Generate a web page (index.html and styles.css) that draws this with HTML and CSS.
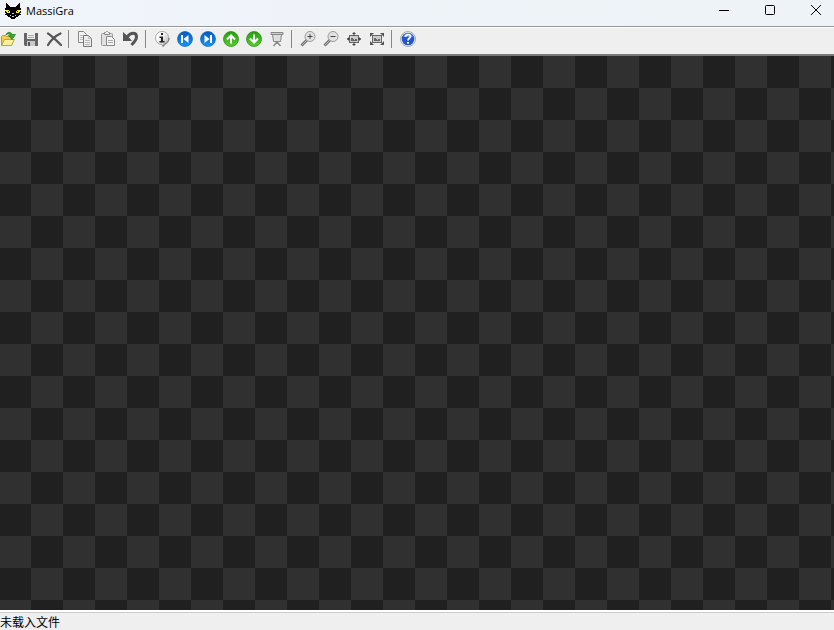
FILE: index.html
```
<!DOCTYPE html>
<html lang="zh-CN">
<head>
<meta charset="utf-8">
<meta name="viewport" content="width=device-width, initial-scale=1">
<title>MassiGra</title>
<link rel="stylesheet" href="styles.css">
</head>
<body>
<svg class="defs" aria-hidden="true">
  <defs>
    <linearGradient id="blue" x2="0" y2="1"><stop offset="0" stop-color="#0759bd"/><stop offset="1" stop-color="#1496fa"/></linearGradient>
    <linearGradient id="green" x2="0" y2="1"><stop offset="0" stop-color="#269d13"/><stop offset="1" stop-color="#55cf2c"/></linearGradient>
    <linearGradient id="silver" x2="1" y2="1"><stop offset="0.300" stop-color="#fff"/><stop offset="1" stop-color="#aaa"/></linearGradient>
    <g id="lens"><path d="M7 9 1.500 14.500" stroke="#777" stroke-width="3"/><path d="M7 9 2 14" stroke="#b5b5b5"/><circle cx="10" cy="5.500" r="5" fill="#e2e2e2" stroke="#999"/></g>
    <g id="photo"><path d="M3 4h10v8H3z" fill="#666"/><path d="M4 5h8v6H4z" fill="#ccc"/><path d="M5 9V7h2v1h1v1h1V8h2v2H5z" fill="#666"/></g>
  </defs>
</svg>
<header class="titlebar">
  <svg class="cat" viewBox="0 0 16 16" shape-rendering="crispEdges" aria-hidden="true"><path d="M1 0h1v1h1v1h1v1h1v1h6V3h1V2h1V1h1V0h1v5h1v2h-1v1h1v2h-1v1h1v1h-2v1h-1v1h-2v1h-1v1H6v-1H5v-1H3v-1H2v-1H0v-1h1v-1H0V8h1V7H0V5h1z"/><path d="M1 7h3v1h1v2H2V9H1zM15 7h-3v1h-1v2h3V9h1z" fill="#ffee12"/><path d="M3 8h1v1H3zM12 8h1v1h-1z" fill="#000"/><path d="M7 10h2v1H7zM5 12h1v1H5zM10 12h1v1h-1zM7 13h2v1H7z" fill="#ccc"/></svg>
  <h1 class="title">MassiGra</h1>
  <div class="window-controls">
    <button type="button" aria-label="最小化"><svg viewBox="0 0 12 12"><path d="M1 6.500h10"/></svg></button>
    <button type="button" aria-label="最大化"><svg viewBox="0 0 12 12"><rect x="1.500" y="1.500" width="9" height="9" rx="1"/></svg></button>
    <button type="button" aria-label="关闭"><svg viewBox="0 0 12 12"><path d="m1 1 10 10M11 1 1 11"/></svg></button>
  </div>
</header>
<nav class="toolbar" aria-label="工具栏">
  <button type="button" aria-label="打开"><svg viewBox="0 0 16 16"><path d="M1.500 14.500V5.500l1-1h3l1 1h5v9z" fill="#f0cf55" stroke="#c29a20"/><path d="M1.500 14.500 4.500 8.500h10l-3 6z" fill="#fff0a0" stroke="#c9a32b"/><path d="M6 4C7 .5 11 .5 12 3.500h3.500L12 8.500 8.500 4.500h2C10 2.500 8 2.500 6 4z" fill="#32a82c" stroke="#168018" stroke-width=".7"/></svg></button>
  <button type="button" aria-label="保存"><svg viewBox="0 0 16 16"><path d="M1 2h14v13H2l-1-1z" fill="#656565"/><path d="M4 2h8v6H4z" fill="#eee"/><path d="M5 4.500h6M5 6.500h6" stroke="#aaa"/><path d="M4 10h8v5H4z" fill="#c9c9c9"/><path d="M5 11h2v4H5z" fill="#555"/></svg></button>
  <button type="button" aria-label="删除"><svg viewBox="0 0 16 16"><path d="M2 2.500C6 5 10 9 15 14M14.500 2.500C9 5 5 9 2 14" fill="none" stroke="#555" stroke-width="2.200" stroke-linecap="round"/></svg></button>
  <span class="separator"></span>
  <button type="button" aria-label="复制"><svg viewBox="0 0 16 16"><path d="M1.500.5h5l3 3v8h-8z" fill="#f3f3f3" stroke="#888"/><path d="M3 4.500h3M3 6.500h3M3 8.500h3" stroke="#bbb"/><path d="M6.500 4.500h5l3 3v8h-8z" fill="#eee" stroke="#777"/><path d="M11.500 4.500v3h3M8 9.500h5M8 11.500h5M8 13.500h5" fill="none" stroke="#bbb"/></svg></button>
  <button type="button" aria-label="粘贴"><svg viewBox="0 0 16 16"><rect x="1.500" y="2.500" width="11" height="12" rx="1" fill="#e0e0e0" stroke="#999"/><path d="M4.500 3.500v-2h1l1-1h1l1 1h1v2z" fill="#eee" stroke="#888"/><path d="M6.500 5.500h5l3 3v6h-8z" fill="#f4f4f4" stroke="#888"/><path d="M8 9.500h5M8 11.500h5" stroke="#aaa"/></svg></button>
  <button type="button" aria-label="撤销"><svg viewBox="0 0 16 16"><path d="M4 6C8 1 13.500 1 13.500 6c0 3-2 5-5 8" fill="none" stroke="#555" stroke-width="3"/><path d="M0 1v9h9L6.500 7 5 5.500z" fill="#555"/></svg></button>
  <span class="separator"></span>
  <button type="button" aria-label="图像信息"><svg viewBox="0 0 16 16"><path d="M8 .5a7 7 0 0 1 3.500 13L9 16l-1-2.500A6.500 6.500 0 1 1 8 .5z" fill="url(#silver)" stroke="#aaa"/><path d="m9 15 1.500-2C13 12 15 10 15 7" fill="none" stroke="#777"/><path d="M7 2h2v2H7zM5.500 5.500H9V10h1.500v1.500h-5V10H7V7H5.500z" fill="#222"/></svg></button>
  <button type="button" aria-label="上一张"><svg viewBox="0 0 16 16"><circle cx="8" cy="8" r="7.500" fill="url(#blue)" stroke="#1266b7" stroke-width=".7"/><path d="M4 4h2v8H4zM11.500 4v8L6.500 8z" fill="#fff"/></svg></button>
  <button type="button" aria-label="下一张"><svg viewBox="0 0 16 16"><circle cx="8" cy="8" r="7.500" fill="url(#blue)" stroke="#1266b7" stroke-width=".7"/><path d="M10 4h2v8h-2zM4.500 4v8l5-4z" fill="#fff"/></svg></button>
  <button type="button" aria-label="上一个文件夹"><svg viewBox="0 0 16 16"><circle cx="8" cy="8" r="7.500" fill="url(#green)" stroke="#278616" stroke-width=".7"/><path d="M8 12.500V4.500M4 8.500l4-4 4 4" fill="none" stroke="#fff" stroke-width="2"/></svg></button>
  <button type="button" aria-label="下一个文件夹"><svg viewBox="0 0 16 16"><circle cx="8" cy="8" r="7.500" fill="url(#green)" stroke="#278616" stroke-width=".7"/><path d="M8 3.500v8M4 7.500l4 4 4-4" fill="none" stroke="#fff" stroke-width="2"/></svg></button>
  <button type="button" aria-label="幻灯片放映"><svg viewBox="0 0 16 16"><path d="M3.500 3.500h9l-1 7h-7z" fill="#ddd" stroke="#888"/><path d="M2 1.500h12v2H2z" fill="#ccc" stroke="#888"/><path d="M8 10v3M8 11l-3.500 4M8 11l3.500 4" stroke="#888" stroke-width="1.500"/></svg></button>
  <span class="separator"></span>
  <button type="button" aria-label="放大"><svg viewBox="0 0 16 16"><use href="#lens"/><path d="M7.500 5.500h5M10 3v5" stroke="#444"/></svg></button>
  <button type="button" aria-label="缩小"><svg viewBox="0 0 16 16"><use href="#lens"/><path d="M7.500 5.500h5" stroke="#444"/></svg></button>
  <button type="button" aria-label="原始大小"><svg viewBox="0 0 16 16"><use href="#photo"/><path d="M8 2v3M8 14v-3M1 8h3M15 8h-3" stroke="#444"/><path d="m8 1 2 2H6zM8 15l2-2H6zM1 8l2-2v4zM15 8l-2-2v4z" fill="#444"/></svg></button>
  <button type="button" aria-label="适应窗口"><svg viewBox="0 0 16 16"><use href="#photo"/><path d="M1 2h4L1 6zM15 2h-4l4 4zM1 14v-4l4 4zM15 14v-4l-4 4z" fill="#555"/></svg></button>
  <span class="separator"></span>
  <button type="button" aria-label="帮助"><svg viewBox="0 0 16 16"><circle cx="8" cy="8" r="7.500" fill="#eee" stroke="#aaa"/><circle cx="8" cy="8" r="6.300" fill="#2456cb"/><path d="M3 6a5 4 0 0 1 10 0" fill="#4c82df"/><path d="M5.500 6c0-3 5-3 5-.5C10.500 7 8 7 8 9.500M8 11v1.800" fill="none" stroke="#fff" stroke-width="1.800"/></svg></button>
</nav>
<main class="canvas" aria-label="图像"></main>
<footer class="statusbar">未载入文件</footer>
</body>
</html>
```
FILE: styles.css
```
* {
  box-sizing: border-box;
}

body {
  display: flex;
  flex-direction: column;
  height: 100vh;
  margin: 0;
  overflow: hidden;
  background: #efefef;
  color: #000;
  font: 12px/16px "Noto Sans", "Noto Sans CJK SC", sans-serif;
}

.defs {
  position: absolute;
  width: 0;
  height: 0;
}

button {
  display: flex;
  flex: none;
  align-items: center;
  padding: 0;
  border: 0;
  background: transparent;
}

.titlebar {
  display: flex;
  flex: none;
  align-items: center;
  height: 27px;
  padding: 0 0 4px 5px;
  border-bottom: 1px solid #969799;
  background: linear-gradient(90deg, #f0f4fb, #edf3f7);
}

.cat {
  width: 16px;
  height: 16px;
}

.title {
  margin: 0 0 0 5px;
  font: 11px/16px "Open Sans", sans-serif;
}

.window-controls {
  display: flex;
  margin-right: -5px;
  margin-left: auto;
}

.window-controls button {
  justify-content: center;
  width: 46px;
  height: 22px;
  padding-bottom: 2px;
}

.window-controls svg {
  width: 12px;
  height: 12px;
  fill: none;
  stroke: #000;
}

.toolbar {
  display: flex;
  flex: none;
  align-items: center;
  height: 29px;
  margin-left: -3px;
  padding-bottom: 4px;
  border-top: 1px solid #fff;
  border-bottom: 2px solid #777;
}

.toolbar button {
  width: 23px;
  height: 22px;
  padding-left: 3px;
}

.toolbar svg {
  width: 16px;
  height: 16px;
}

.separator {
  flex: none;
  width: 8px;
  height: 18px;
  padding-left: 2px;
}

.separator::before {
  content: "";
  display: block;
  width: 1px;
  height: 100%;
  background: #888;
}

.canvas {
  flex: 1;
  min-height: 0;
  background: conic-gradient(#303030 25%, #202020 0 50%, #303030 0 75%, #202020 0) -1px 0 / 64px 64px;
}

.statusbar {
  flex: none;
  height: 20px;
  padding-top: 4px;
  border-top: 2px solid #fff;
  box-shadow: inset 0 1px #ccc;
  line-height: 14px;
}
```
